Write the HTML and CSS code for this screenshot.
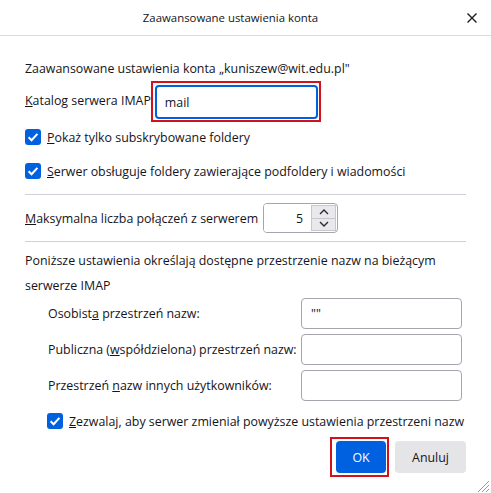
FILE: index.html
```html
<!DOCTYPE html>
<html lang="pl">
<head>
  <meta charset="UTF-8" />
  <meta name="viewport" content="width=device-width, initial-scale=1.0" />
  <title>Zaawansowane ustawienia konta</title>
  <link rel="stylesheet" href="styles.css">
</head>
<body>
  <div class="dialog">
    <header class="titlebar">
      <span class="title">Zaawansowane ustawienia konta</span>
      <button class="close" aria-label="Zamknij">
        <svg width="12" height="12" viewBox="0 0 12 12"><path d="M1.5 1.5 L10.5 10.5 M10.5 1.5 L1.5 10.5" stroke="#1b1b1f" stroke-width="1.4" fill="none"/></svg>
      </button>
    </header>

    <div class="content">
      <p class="intro">Zaawansowane ustawienia konta „kuniszew@wit.edu.pl"</p>

      <div class="row">
        <label for="dir"><u>K</u>atalog serwera IMAP</label>
        <span class="mark mark-input"><input id="dir" class="field focused" type="text" value="mail" /></span>
      </div>

      <label class="check">
        <span class="box"><svg width="16" height="16" viewBox="0 0 16 16"><path d="M3.6 8.2 L6.6 11.2 L12.4 4.8" stroke="#fff" stroke-width="2" fill="none"/></svg></span>
        <span><u>P</u>okaż tylko subskrybowane foldery</span>
      </label>
      <label class="check">
        <span class="box"><svg width="16" height="16" viewBox="0 0 16 16"><path d="M3.6 8.2 L6.6 11.2 L12.4 4.8" stroke="#fff" stroke-width="2" fill="none"/></svg></span>
        <span><u>S</u>erwer obsługuje foldery zawierające podfoldery i wiadomości</span>
      </label>

      <hr class="sep sep-first" />

      <div class="row conn-row">
        <label for="conn"><u>M</u>aksymalna liczba połączeń z serwerem</label>
        <div class="spinner">
          <input id="conn" type="text" value="5" />
          <div class="spin-btns">
            <span class="spin"><svg width="10" height="6" viewBox="0 0 10 6"><path d="M1 5 L5 1 L9 5" stroke="#2b2a33" stroke-width="1.4" fill="none"/></svg></span>
            <span class="spin"><svg width="10" height="6" viewBox="0 0 10 6"><path d="M1 1 L5 5 L9 1" stroke="#2b2a33" stroke-width="1.4" fill="none"/></svg></span>
          </div>
        </div>
      </div>

      <hr class="sep sep-second" />

      <p class="note">Poniższe ustawienia określają dostępne przestrzenie nazw na bieżącym serwerze IMAP</p>

      <div class="ns-grid">
        <label for="ns1">Osobist<u>a</u> przestrzeń nazw:</label>
        <input id="ns1" class="field" type="text" value='""' />
        <label for="ns2">Publiczna (<u>w</u>spółdzielona) przestrzeń nazw:</label>
        <input id="ns2" class="field" type="text" value="" />
        <label for="ns3">Przestrzeń <u>n</u>azw innych użytkowników:</label>
        <input id="ns3" class="field" type="text" value="" />
      </div>

      <label class="check check-indent">
        <span class="box"><svg width="16" height="16" viewBox="0 0 16 16"><path d="M3.6 8.2 L6.6 11.2 L12.4 4.8" stroke="#fff" stroke-width="2" fill="none"/></svg></span>
        <span><u>Z</u>ezwalaj, aby serwer zmieniał powyższe ustawienia przestrzeni nazw</span>
      </label>

      <div class="buttons">
        <span class="mark mark-btn"><button class="btn btn-primary">OK</button></span>
        <button class="btn">Anuluj</button>
      </div>
    </div>

    <svg class="grip" width="14" height="12" viewBox="0 0 14 12">
      <path d="M13 1 L2 12 M13 5 L6 12 M13 9 L10 12" stroke="#9a9a9a" stroke-width="1" fill="none"/>
    </svg>
  </div>
</body>
</html>
```

FILE: styles.css
```css
* { box-sizing: border-box; }
html, body { margin: 0; background: #fff; }
body { font-family: "Open Sans", "Noto Sans", sans-serif; font-size: 12.4px; color: #15141a; }

.dialog { position: relative; width: 491px; height: 493px; background: #fff; overflow: hidden; }

.titlebar { height: 36px; border-bottom: 1px solid #dcdce0; display: flex; align-items: center; justify-content: center; padding-right: 30px; position: relative; }
.title { font-size: 11.4px; }
.close { position: absolute; right: 12px; top: 11px; width: 14px; height: 14px; padding: 0; border: none; background: none; display: flex; align-items: center; justify-content: center; }

.content { padding: 0 25px; }
.content p { margin: 0; }
.intro { margin-top: 23px !important; line-height: 20px; }

.row { display: flex; align-items: center; }
.row label { white-space: nowrap; }

.mark { display: inline-block; border: 2px solid #d1111c; }
.mark-input { margin-top: 2px; padding: 2px 1px 1px 2px; }

.field { font-family: inherit; font-size: 12.4px; color: #15141a; border: 1px solid #a5a5ad; border-radius: 4px; height: 31px; padding: 0 9px; background: #fff; outline: none; }
.field.focused { width: 163px; height: 34px; border: 2px solid #0061e0; padding: 0 8px; }

.check { display: flex; align-items: center; height: 26px; margin-top: 8px; gap: 6px; white-space: nowrap; }
.check:first-of-type { margin-top: 2px; }
.box { width: 16px; height: 16px; border-radius: 3px; background: #0061e0; display: flex; flex: none; }

.sep { border: none; border-top: 1px solid #cfcfd8; margin: 10px 0 0; height: 0; }
.sep-second { margin-top: 8px; }

.conn-row { margin-top: 8px; }
.spinner { margin-left: 5px; display: flex; width: 75px; height: 30px; border: 1px solid #a5a5ad; border-radius: 4px; overflow: hidden; }
.spinner input { width: 47px; border: none; outline: none; text-align: right; padding: 0 8px 0 0; font-family: inherit; font-size: 12.4px; color: #15141a; background: #fff; }
.spin-btns { flex: 1; display: flex; flex-direction: column; margin: 1px 1px 1px 0; border: 1px solid #c8c8cc; background: #e9e9ed; }
.spin { flex: 1; display: flex; align-items: center; justify-content: center; }
.spin + .spin { border-top: 1px solid #c8c8cc; }

.note { margin-top: 6px !important; line-height: 25px; }

.ns-grid { display: grid; grid-template-columns: 253px 161px; row-gap: 5px; padding-left: 23px; align-items: center; }

.check-indent { margin-left: 22px; margin-top: 7px; }

.buttons { display: flex; justify-content: flex-end; align-items: center; gap: 6px; margin-top: 3px; }
.mark-btn { padding: 2px 1px 2px 4px; }
.btn { font-family: inherit; font-size: 12.4px; height: 32px; border: none; border-radius: 4px; background: #e5e5e8; color: #15141a; width: 71px; }
.btn-primary { background: #0061e0; color: #fff; width: 50px; }

.grip { position: absolute; right: 1px; bottom: 1px; }
```
